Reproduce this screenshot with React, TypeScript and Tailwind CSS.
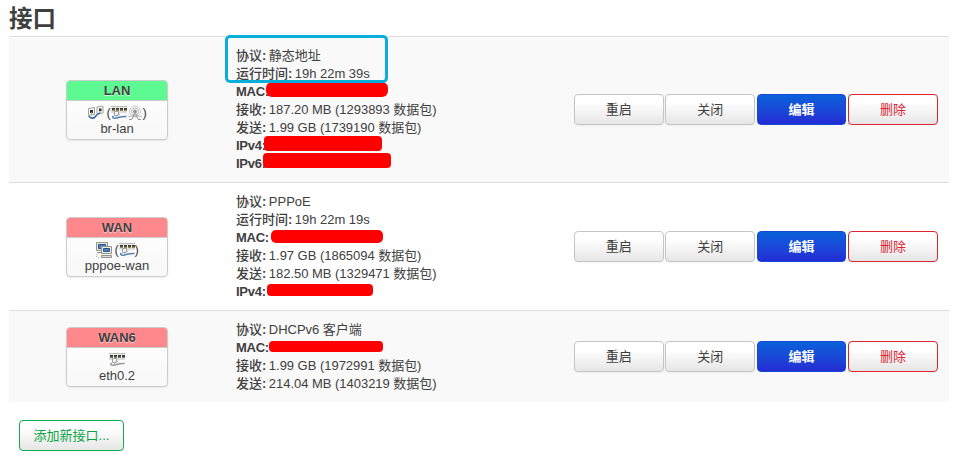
import { FC } from 'react'

interface Row {
  label: string
  value?: string
  mask?: string
}

interface Iface {
  name: string
  device: string
  up?: boolean
  icon: 'bridge' | 'tunnel' | 'ethernet'
  rows: Row[]
}

const interfaces: Iface[] = [
  {
    name: 'LAN',
    device: 'br-lan',
    up: true,
    icon: 'bridge',
    rows: [
      { label: '协议', value: '静态地址' },
      { label: '运行时间', value: '19h 22m 39s' },
      { label: 'MAC', mask: 'left-[30px] -top-px h-[15px] w-[122px] rounded-[6px]' },
      { label: '接收', value: '187.20 MB (1293893 数据包)' },
      { label: '发送', value: '1.99 GB (1739190 数据包)' },
      { label: 'IPv4', mask: 'left-[28px] -top-px h-[15px] w-[118px] rounded-[4px]' },
      { label: 'IPv6', mask: 'left-[26.500px] -top-[2px] h-[15px] w-[128px] rounded-[4px]' },
    ],
  },
  {
    name: 'WAN',
    device: 'pppoe-wan',
    icon: 'tunnel',
    rows: [
      { label: '协议', value: 'PPPoE' },
      { label: '运行时间', value: '19h 22m 19s' },
      { label: 'MAC', mask: 'left-[35px] top-px h-[13px] w-[112px] rounded-[5px]' },
      { label: '接收', value: '1.97 GB (1865094 数据包)' },
      { label: '发送', value: '182.50 MB (1329471 数据包)' },
      { label: 'IPv4', mask: 'left-[30.500px] top-px h-[12px] w-[106px] rounded-[4px]' },
    ],
  },
  {
    name: 'WAN6',
    device: 'eth0.2',
    icon: 'ethernet',
    rows: [
      { label: '协议', value: 'DHCPv6 客户端' },
      { label: 'MAC', mask: 'left-[33px] top-[2px] h-[11px] w-[114px] rounded-[4px]' },
      { label: '接收', value: '1.99 GB (1972991 数据包)' },
      { label: '发送', value: '214.04 MB (1403219 数据包)' },
    ],
  },
]

const BridgeIcon: FC = () => (
  <svg width="16" height="16" viewBox="0 0 16 16" fill="none" className="shrink-0">
    <path d="M.5 3.500 6.500 2.500v7l-6 1z" fill="#f4f4ef" stroke="#a4a49f" />
    <path d="M9 2 15 1v7l-6 1z" fill="#f4f4ef" stroke="#a4a49f" />
    <path d="M2 5h3v3H2zM11 3.500h2.500v2.500H11z" fill="#333" />
    <path d="M3.500 7v3M12 6v2" stroke="#999" />
    <path d="M1 11c1 3 5 2.500 6 1s2-3 5-4" stroke="#386ba6" strokeWidth="1.700" />
  </svg>
)

const EthernetIcon: FC<{ disabled?: boolean }> = ({ disabled }) => (
  <svg width="16" height="16" viewBox="0 0 16 16" fill="none" className="shrink-0">
    <path d="M0 1h16v6.500H0z" fill="#ecece9" />
    <path d="M0 1.500h16" stroke="#b9b9b6" />
    <path d="M1 3h3v2.500H1zM5 3h3v2.500H5zM9 3h3v2.500H9zM13 3h3v2.500h-3z" fill="#333" />
    <path d="M1 5h3M5 5h3M9 5h3M13 5h3" stroke={disabled ? '#666' : '#8a7b30'} />
    <path d="M0 7h16" stroke="#c7c7c3" />
    <path d="M3.500 6.500h4v3l-1.500 1H3.500z" fill="#f4f4f0" stroke="#a2a29e" />
    <path
      d="M2.500 11c-2 2 0 2.500 3 2 3-.5 5-2 10-1.500"
      stroke={disabled ? '#989898' : '#5583b3'}
      strokeWidth="1.500"
    />
    <path d="m5 11.500 4-2.500" stroke={disabled ? '#aaa' : '#94a6b5'} />
  </svg>
)

const WifiIcon: FC = () => (
  <svg width="16" height="16" viewBox="0 0 16 16" fill="none" stroke="#aaa" className="shrink-0">
    <circle cx="8" cy="6.500" r="5.500" stroke="#c8c8c8" />
    <circle cx="8" cy="6.500" r="3.500" stroke="#b5b5b5" />
    <circle cx="8" cy="6.500" r="1.500" fill="#8d8d8d" stroke="#999" />
    <path d="M7.500 8 5 14m3.500-6 2.500 6M6.500 11h3M2 14.500h3m6 0h3" stroke="#999" />
    <path d="m1 12 5-1.500m4 0 5 1.500" stroke="#bbb" />
  </svg>
)

const TunnelIcon: FC = () => (
  <svg width="16" height="16" viewBox="0 0 16 16" fill="none" className="shrink-0">
    <path d="M.5.500h11v8H.5z" fill="#e7e7e0" stroke="#999990" />
    <path d="M2.500 2.500h7v4h-7z" fill="#4c80be" stroke="#2b568e" />
    <path d="M1 10.500h5" stroke="#888" />
    <path d="M5.500 4.500h10v7h-10z" fill="#eeeee8" stroke="#92928a" />
    <path d="M7.500 6.500h6v3h-6z" fill="#4c80be" stroke="#2b568e" />
    <path d="M5.500 13.500h10v2h-10z" fill="#ddd" stroke="#92928a" />
    <path d="M.5 12v4M2 15.500h2" stroke="#8eb8df" strokeDasharray="1 1" />
  </svg>
)

const Badge: FC<{ iface: Iface }> = ({ iface }) => (
  <div className="ml-[57px] mt-px flex h-[60px] w-[102px] flex-col overflow-hidden rounded-[4px] border border-[#ccc] bg-gradient-to-b from-white to-[#f8f8f8] text-center shadow-[0_1px_2px_rgba(0,0,0,0.08)]">
    <div
      className={
        iface.up
          ? 'h-[20px] border-b border-[#ccc] bg-[#5df991] font-bold leading-[19px]'
          : 'h-[20px] border-b border-[#ccc] bg-[#ff888c] font-bold leading-[19px]'
      }
    >
      <span className="[text-shadow:0_1px_1px_rgba(255,255,255,0.7)]">{iface.name}</span>
    </div>
    <div className="flex h-[19px] items-center justify-center pt-[4px]">
      {iface.icon === 'bridge' && (
        <>
          <BridgeIcon />
          <span className="ml-[3px] w-[4px] leading-[16px]">(</span>
          <EthernetIcon />
          <WifiIcon />
          <span className="w-[4px] leading-[16px]">)</span>
        </>
      )}
      {iface.icon === 'tunnel' && (
        <>
          <TunnelIcon />
          <span className="ml-[3px] w-[4px] leading-[16px]">(</span>
          <EthernetIcon />
          <span className="w-[4px] leading-[16px]">)</span>
        </>
      )}
      {iface.icon === 'ethernet' && <EthernetIcon disabled />}
    </div>
    <div className="leading-[18px]">{iface.device}</div>
  </div>
)

const Details: FC<{ iface: Iface }> = ({ iface }) => (
  <div className="relative w-[338px] pt-[10px] leading-[18px]">
    {iface.rows.map((row) => (
      <div key={row.label} className="relative h-[18px] whitespace-nowrap tracking-[-0.03px]">
        <span className={row.mask ? 'font-bold tracking-[-0.25px]' : 'font-medium'}>{row.label}</span>
        <b className="-mr-px">:</b> {row.value}
        {row.mask && <span className={`absolute bg-[#ff0000] ${row.mask}`} />}
      </div>
    ))}
    {iface.up && (
      <div className="absolute -left-[11px] -top-[2px] h-[48px] w-[163px] rounded-[5px] border-3 border-[#0aaedb]" />
    )}
  </div>
)

const buttonBase = 'h-[31px] w-[89.500px] rounded-[4px] border text-center leading-[29px]'

const Actions: FC = () => (
  <div className="-mt-px flex gap-[1.900px]">
    <button className={`${buttonBase} border-[#c5c5c5] bg-gradient-to-b from-white from-25% to-[#e6e6e6] shadow-[0_1px_2px_rgba(0,0,0,0.05)]`}>
      重启
    </button>
    <button className={`${buttonBase} border-[#c5c5c5] bg-gradient-to-b from-white from-25% to-[#e6e6e6] shadow-[0_1px_2px_rgba(0,0,0,0.05)]`}>
      关闭
    </button>
    <button className={`${buttonBase} border-[#1748d5] bg-gradient-to-b from-[#0860da] to-[#242bd5] font-bold text-white`}>
      编辑
    </button>
    <button className={`${buttonBase} border-[#dc2533] bg-gradient-to-b from-white from-25% to-[#e6e6e6] text-[#dc2533]`}>
      删除
    </button>
  </div>
)

const App: FC = () => (
  <main className="h-[463px] w-[961px] overflow-hidden bg-white pl-[9px] font-['Liberation_Sans','Noto_Sans_CJK_SC',sans-serif] text-[13px] text-[#404040]">
    <h1 className="h-[36px] pt-px text-[23.500px] font-bold leading-[36px]">接口</h1>
    <div className="w-[940px]">
      {interfaces.map((iface) => (
        <section key={iface.name} className="flex items-center border-t border-[#ddd] odd:bg-[#f9f9f9]">
          <div className="w-[227px]">
            <Badge iface={iface} />
          </div>
          <div className="pb-[9px]">
            <Details iface={iface} />
          </div>
          <Actions />
        </section>
      ))}
    </div>
    <button className="ml-[10px] mt-[18px] h-[31px] w-[105px] rounded-[4px] border border-[#0aad4a] bg-gradient-to-b from-white from-25% to-[#e6e6e6] leading-[29px] text-[#0aa344]">
      添加新接口...
    </button>
  </main>
)

export default App
